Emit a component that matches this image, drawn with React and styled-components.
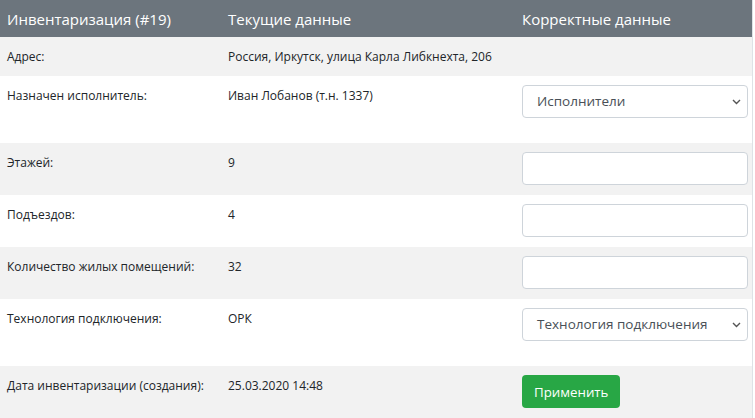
import React from "react";
import styled, { createGlobalStyle } from "styled-components";

const Global = createGlobalStyle`
  html, body { margin: 0; padding: 0; background: #fff; }
  body { font-family: "Open Sans", "Noto Sans", sans-serif; color: #212529; }
  * { box-sizing: border-box; }
`;

const Table = styled.div`
  width: 753px;
  border-right: 1px solid #dee2e6;
`;

const Row = styled.div`
  display: grid;
  grid-template-columns: 221px 294px 1fr;
  background: ${(p) => (p.$striped ? "#f2f2f2" : "#fff")};
`;

const Head = styled(Row)`
  background: #6c757d;
  color: #fff;
  height: 37px;
  align-items: center;
  font-size: 15px;
`;

const HeadCell = styled.div`
  padding: 0 7px;
  white-space: nowrap;
`;

const Cell = styled.div`
  padding: ${(p) => (p.$field ? "9px 4px 10px 7px" : "12px 7px")};
  font-size: 12px;
  line-height: 15px;
  white-space: nowrap;
`;

const Input = styled.input`
  display: block;
  width: 226px;
  height: 33px;
  border: 1px solid #ced4da;
  border-radius: 4px;
  background: #fff;
  font: inherit;
`;

const SelectBox = styled.div`
  position: relative;
  width: 226px;
  height: 33px;
  border: 1px solid #ced4da;
  border-radius: 4px;
  background: #fff;
  display: flex;
  align-items: center;
  padding-left: 14px;
  font-size: 13.5px;
  color: #495057;
  margin-bottom: 15px;
`;

const Chevron = styled.svg`
  position: absolute;
  right: 6px;
  top: 13px;
`;

const Button = styled.button`
  height: 33px;
  padding: 0 12px;
  border: none;
  border-radius: 4px;
  background: #28a745;
  color: #fff;
  font-family: inherit;
  font-size: 13.3px;
`;

function Select({ children }) {
  return (
    <SelectBox>
      {children}
      <Chevron width="9" height="6" viewBox="0 0 9 6">
        <path d="M1 1l3.5 3.5L8 1" fill="none" stroke="#555" strokeWidth="1.4" />
      </Chevron>
    </SelectBox>
  );
}

const rows = [
  { label: "Адрес:", value: "Россия, Иркутск, улица Карла Либкнехта, 206" },
  { label: "Назначен исполнитель:", value: "Иван Лобанов (т.н. 1337)", field: "select", placeholder: "Исполнители" },
  { label: "Этажей:", value: "9", field: "input" },
  { label: "Подъездов:", value: "4", field: "input" },
  { label: "Количество жилых помещений:", value: "32", field: "input" },
  { label: "Технология подключения:", value: "ОРК", field: "select", placeholder: "Технология подключения" },
  { label: "Дата инвентаризации (создания):", value: "25.03.2020 14:48", field: "button" },
];

export default function App() {
  return (
    <>
      <Global />
      <Table>
        <Head>
          <HeadCell>Инвентаризация (#19)</HeadCell>
          <HeadCell>Текущие данные</HeadCell>
          <HeadCell>Корректные данные</HeadCell>
        </Head>
        {rows.map((r, i) => (
          <Row key={i} $striped={i % 2 === 0}>
            <Cell>{r.label}</Cell>
            <Cell>{r.value}</Cell>
            <Cell $field={!!r.field}>
              {r.field === "select" && <Select>{r.placeholder}</Select>}
              {r.field === "input" && <Input />}
              {r.field === "button" && <Button>Применить</Button>}
            </Cell>
          </Row>
        ))}
      </Table>
    </>
  );
}
